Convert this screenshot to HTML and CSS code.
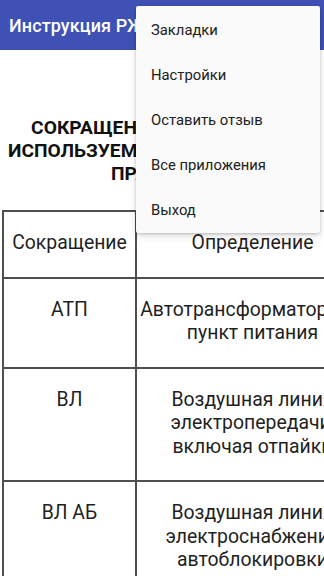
FILE: index.html
```html
<!DOCTYPE html>
<html lang="ru">
<head>
<meta charset="utf-8">
<title>Инструкция РЖД</title>
<link rel="stylesheet" href="styles.css">
</head>
<body>
<div class="screen">
  <header class="appbar">
    <h1 class="appbar-title">Инструкция РЖД</h1>
  </header>
  <main class="doc">
    <h2 class="doc-heading">СОКРАЩЕНИЯ, ПРИНЯТЫЕ И<br>ИСПОЛЬЗУЕМЫЕ В ИНСТРУКЦИИ<br>ПРАВИЛАХ</h2>
    <table class="abbr-table">
      <tr>
        <td class="col-abbr">Сокращение</td>
        <td class="col-def">Определение</td>
      </tr>
      <tr>
        <td class="col-abbr">АТП</td>
        <td class="col-def">Автотрансформаторный<br>пункт питания</td>
      </tr>
      <tr>
        <td class="col-abbr">ВЛ</td>
        <td class="col-def">Воздушная линия<br>электропередачи,<br>включая отпайки</td>
      </tr>
      <tr>
        <td class="col-abbr">ВЛ АБ</td>
        <td class="col-def">Воздушная линия<br>электроснабжения<br>автоблокировки</td>
      </tr>
    </table>
  </main>
  <nav class="overflow-menu">
    <div class="menu-item">Закладки</div>
    <div class="menu-item">Настройки</div>
    <div class="menu-item">Оставить отзыв</div>
    <div class="menu-item">Все приложения</div>
    <div class="menu-item">Выход</div>
  </nav>
</div>
</body>
</html>
```
FILE: styles.css
```css
html, body {
  margin: 0;
  padding: 0;
  overflow: hidden;
  background: #ffffff;
}

.screen {
  position: relative;
  width: 324px;
  height: 576px;
  overflow: hidden;
  font-family: Roboto, "Noto Sans", sans-serif;
  color: #212121;
}

.appbar {
  height: 50px;
  background: #3f51b5;
  display: flex;
  align-items: center;
  padding-left: 9px;
}

.appbar-title {
  margin: 0;
  font-size: 18px;
  font-weight: 500;
  color: #ffffff;
  white-space: nowrap;
  letter-spacing: 0.1px;
}

.doc {
  width: 380px;
  padding: 0 0 0 2px;
  color: #1f1f1f;
}

.doc-heading {
  width: 308px;
  margin: 66px 0 0 6px;
  font-size: 19.2px;
  font-weight: 700;
  line-height: 23px;
  text-align: center;
  color: #111111;
  white-space: nowrap;
}

.abbr-table {
  margin-top: 25px;
  width: 368px;
  border-collapse: collapse;
  font-size: 19.4px;
  line-height: 23.5px;
}

.abbr-table td {
  border: 2px solid #4f4f4f;
  padding: 19px 1px 22px;
  text-align: center;
  vertical-align: top;
  white-space: nowrap;
}

.col-abbr {
  width: 129px;
}

.overflow-menu {
  position: absolute;
  top: 6px;
  left: 136px;
  width: 184px;
  padding-top: 2px;
  background: #fafafa;
  box-shadow: 0 1px 3px rgba(0, 0, 0, 0.2), 0 3px 8px rgba(0, 0, 0, 0.12);
  border-radius: 2px;
}

.menu-item {
  height: 45px;
  line-height: 45px;
  padding-left: 15px;
  font-size: 14.8px;
  color: #212121;
  white-space: nowrap;
}
```
